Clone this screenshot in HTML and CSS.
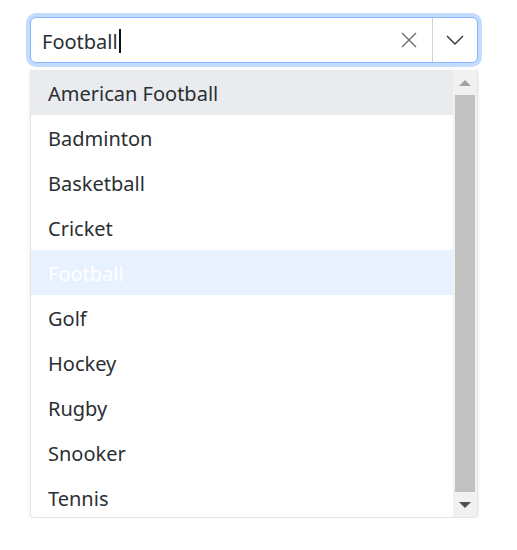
FILE: index.html
```html
<!DOCTYPE html>
<html lang="en">
<head>
    <meta charset="UTF-8">
    <meta name="viewport" content="width=device-width, initial-scale=1.0">
    <title>Combo box</title>
    <link rel="stylesheet" href="styles.css">
</head>
<body>
    <div class="combo">
        <div class="combo-input">
            <span class="combo-text">Football<span class="caret"></span></span>
            <button class="clear-btn" type="button" aria-label="Clear">
                <svg width="18" height="18" viewBox="0 0 18 18"><path d="M2 2L16 16M16 2L2 16" stroke="#6c6c6c" stroke-width="1.4" fill="none"/></svg>
            </button>
            <button class="toggle-btn" type="button" aria-label="Open">
                <svg width="18" height="10" viewBox="0 0 18 10"><path d="M1 1L9 9L17 1" stroke="#333" stroke-width="1.4" fill="none"/></svg>
            </button>
        </div>
        <div class="popup">
            <ul class="list">
                <li class="item hover">American Football</li>
                <li class="item">Badminton</li>
                <li class="item">Basketball</li>
                <li class="item">Cricket</li>
                <li class="item selected">Football</li>
                <li class="item">Golf</li>
                <li class="item">Hockey</li>
                <li class="item">Rugby</li>
                <li class="item">Snooker</li>
                <li class="item">Tennis</li>
            </ul>
            <div class="scrollbar">
                <div class="arrow up"></div>
                <div class="thumb"></div>
                <div class="arrow down"></div>
            </div>
        </div>
    </div>
</body>
</html>
```

FILE: styles.css
```css
body {
    margin: 0;
    background: #fff;
    font-family: "Noto Sans", "Open Sans", sans-serif;
    color: #2b2f33;
}

.combo {
    width: 448px;
    margin: 17px 0 0 30px;
}

.combo-input {
    display: flex;
    align-items: center;
    height: 44px;
    border: 1px solid #86b7fe;
    border-radius: 6px;
    box-shadow: 0 0 0 4px #c2dbfe;
    background: #fff;
}

.combo-text {
    flex: 1;
    padding-left: 11px;
    padding-top: 2px;
    font-size: 20px;
    display: flex;
    align-items: center;
}

.caret {
    display: inline-block;
    width: 2px;
    height: 24px;
    background: #111;
    margin-left: 1px;
}

.clear-btn,
.toggle-btn {
    border: none;
    background: none;
    padding: 0;
    height: 100%;
    display: flex;
    align-items: center;
    justify-content: center;
}

.clear-btn {
    width: 44px;
    margin-right: 1px;
}

.toggle-btn {
    width: 45px;
    border-left: 1px solid #ced4da;
}

.popup {
    display: flex;
    margin-top: 7px;
    height: 447px;
    border: 1px solid #e3e5e8;
    border-top: none;
    border-radius: 0 0 4px 4px;
    box-shadow: 0 2px 4px rgba(0, 0, 0, 0.08);
    overflow: hidden;
}

.list {
    flex: 1;
    list-style: none;
    margin: 0;
    padding: 0;
    overflow: hidden;
}

.item {
    height: 42px;
    padding-top: 3px;
    line-height: 42px;
    padding-left: 17px;
    font-size: 20px;
    white-space: nowrap;
}

.item.hover {
    background: #e9ebef;
}

.item.selected {
    background: #e7f1ff;
    color: #fff;
}

.scrollbar {
    width: 24px;
    background: #f1f1f1;
    display: flex;
    flex-direction: column;
    align-items: center;
}

.arrow {
    height: 25px;
    width: 100%;
    display: flex;
    align-items: center;
    justify-content: center;
}

.arrow::before {
    content: "";
    border-left: 6px solid transparent;
    border-right: 6px solid transparent;
}

.arrow.up::before {
    border-bottom: 6px solid #a3a3a3;
}

.arrow.down::before {
    border-top: 6px solid #505050;
}

.thumb {
    flex: 1;
    width: 20px;
    background: #c1c1c1;
}
```
